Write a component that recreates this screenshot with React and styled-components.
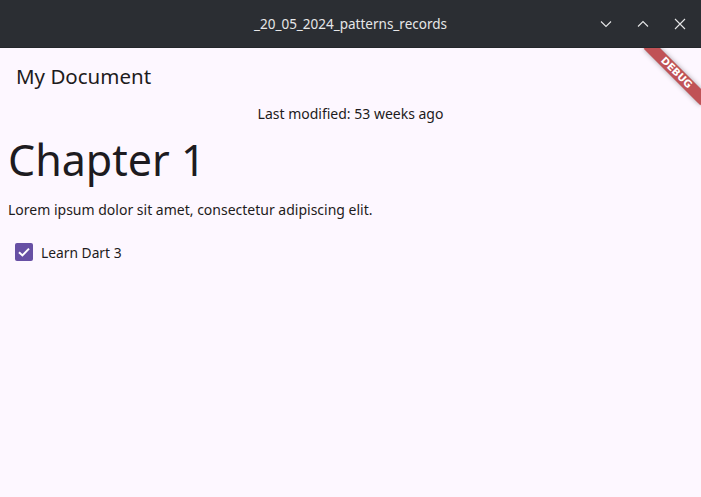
import React from 'react';
import styled, { createGlobalStyle } from 'styled-components';

const GlobalStyle = createGlobalStyle`
    html, body {
        margin: 0;
        padding: 0;
        background: #fdf7ff;
    }
`;

const Window = styled.div`
    display: flex;
    flex-direction: column;
    width: 701px;
    height: 497px;
    overflow: hidden;
    font-family: 'Noto Sans', 'Open Sans', sans-serif;
`;

const TitleBar = styled.div`
    position: relative;
    display: flex;
    align-items: center;
    justify-content: center;
    flex: 0 0 47px;
    background: #2b2e33;
    border-bottom: 1px solid #24272b;
    color: #e6e7e8;
    font-size: 13.5px;
`;

const Controls = styled.div`
    position: absolute;
    top: 0;
    right: 11px;
    bottom: 0;
    display: flex;
    align-items: center;
    gap: 17px;
`;

const ControlButton = styled.div`
    display: flex;
    align-items: center;
    justify-content: center;
    width: 20px;
    height: 20px;
`;

const Content = styled.div`
    position: relative;
    flex: 1;
    display: flex;
    flex-direction: column;
    background: #fdf7ff;
    color: #1d1b20;
    overflow: hidden;
`;

const AppBar = styled.div`
    display: flex;
    align-items: center;
    height: 56px;
    padding: 0 16px;
    font-size: 20.5px;
`;

const Meta = styled.div`
    text-align: center;
    font-size: 14px;
    line-height: 20px;
    color: #1d1b20;
`;

const Body = styled.div`
    display: flex;
    flex-direction: column;
    padding: 0 8px;
`;

const Heading = styled.h1`
    margin: 10px 0 0;
    font-size: 43px;
    font-weight: 400;
    line-height: 52px;
`;

const Paragraph = styled.p`
    margin: 14px 0 0;
    font-size: 14px;
    line-height: 20px;
`;

const CheckRow = styled.label`
    display: flex;
    align-items: center;
    gap: 8px;
    height: 40px;
    margin-top: 12px;
    padding-left: 7px;
    font-size: 13.8px;
`;

const Box = styled.span`
    display: flex;
    align-items: center;
    justify-content: center;
    width: 18px;
    height: 18px;
    border-radius: 2px;
    background: #6750a4;
`;

const Banner = styled.div`
    position: absolute;
    top: 29px;
    right: -40px;
    width: 80px;
    height: 12px;
    transform-origin: 40px -29px;
    transform: rotate(45deg);
    background: rgba(176, 40, 44, 0.8);
    box-shadow: 0 0 5px rgba(0, 0, 0, 0.35);
    color: #fff;
    font-family: 'DejaVu Sans', sans-serif;
    font-size: 10px;
    font-weight: 900;
    line-height: 12px;
    text-align: center;
`;

const Chevron = ({ up }) => (
    <svg width="12" height="12" viewBox="0 0 12 12">
        <path
            d={up ? 'M1 8.5 L6 3.5 L11 8.5' : 'M1 3.5 L6 8.5 L11 3.5'}
            fill="none"
            stroke="#e6e7e8"
            strokeWidth="1.1"
        />
    </svg>
);

const Close = () => (
    <svg width="12" height="12" viewBox="0 0 12 12">
        <path d="M1 1 L11 11 M11 1 L1 11" fill="none" stroke="#e6e7e8" strokeWidth="1.1" />
    </svg>
);

const Check = () => (
    <svg width="14" height="14" viewBox="0 0 14 14">
        <path d="M2 7.2 L5.4 10.4 L12 3.6" fill="none" stroke="#fff" strokeWidth="2" />
    </svg>
);

export default function App() {
    return (
        <>
            <GlobalStyle />
            <Window>
                <TitleBar>
                    _20_05_2024_patterns_records
                    <Controls>
                        <ControlButton>
                            <Chevron />
                        </ControlButton>
                        <ControlButton>
                            <Chevron up />
                        </ControlButton>
                        <ControlButton>
                            <Close />
                        </ControlButton>
                    </Controls>
                </TitleBar>
                <Content>
                    <AppBar>My Document</AppBar>
                    <Meta>Last modified: 53 weeks ago</Meta>
                    <Body>
                        <Heading>Chapter 1</Heading>
                        <Paragraph>Lorem ipsum dolor sit amet, consectetur adipiscing elit.</Paragraph>
                        <CheckRow>
                            <Box>
                                <Check />
                            </Box>
                            Learn Dart 3
                        </CheckRow>
                    </Body>
                    <Banner>DEBUG</Banner>
                </Content>
            </Window>
        </>
    );
}
